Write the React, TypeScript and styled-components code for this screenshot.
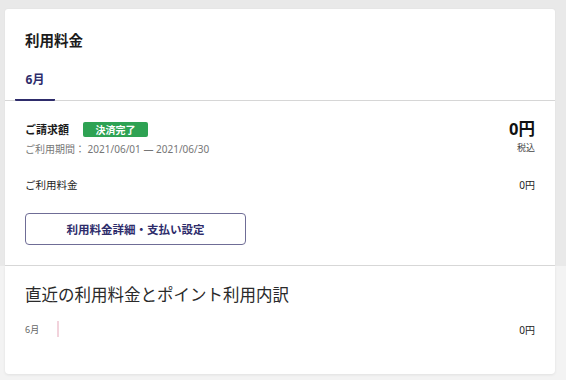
import React from "react";
import styled, { createGlobalStyle } from "styled-components";

const Global = createGlobalStyle`
  html, body { margin: 0; padding: 0; }
  body {
    background: #f3f3f3;
    font-family: "Noto Sans", "Noto Sans CJK JP", sans-serif;
    color: #222;
    width: 566px;
    height: 380px;
    overflow: hidden;
  }
`;

const Page = styled.div`
  display: flex;
  flex-direction: column;
`;

const TopArea = styled.div`
  background: #e9e9e9;
  padding: 9px 11px 0 5px;
`;

const TopCard = styled.section`
  background: #fff;
  border-radius: 3px 3px 0 0;
  box-shadow: 0 0 2px rgba(0, 0, 0, 0.06);
`;

const Header = styled.div`
  padding: 20px 20px 0 20px;
`;

const Title = styled.h2`
  margin: 0;
  font-size: 14.5px;
  font-weight: 700;
  line-height: 22px;
  color: #1c1c1c;
`;

const Tabs = styled.div`
  display: flex;
  margin-top: 20px;
  border-bottom: 1px solid #d6d6d6;
  margin-left: -20px;
  margin-right: -20px;
  padding-left: 10px;
`;

const Tab = styled.div<{ $active?: boolean }>`
  width: 40px;
  text-align: center;
  font-size: 12px;
  font-weight: 700;
  color: #2e2c6b;
  line-height: 18px;
  padding-bottom: 10px;
  border-bottom: 2px solid ${(p) => (p.$active ? "#2e2c6b" : "transparent")};
  margin-bottom: -1px;
  border-radius: 1px;
`;

const Body = styled.div`
  padding: 20px 20px 20px 20px;
  border-bottom: 1px solid #d9d9d9;
`;

const BillRow = styled.div`
  display: flex;
  justify-content: space-between;
  align-items: flex-start;
`;

const BillLeft = styled.div`
  display: flex;
  flex-direction: column;
`;

const LabelLine = styled.div`
  display: flex;
  align-items: center;
  gap: 14px;
  height: 16px;
`;

const BillLabel = styled.span`
  font-size: 11px;
  font-weight: 700;
  color: #1c1c1c;
`;

const Badge = styled.span`
  background: #2ea253;
  color: #fff;
  font-size: 10px;
  font-weight: 700;
  border-radius: 2px;
  width: 65px;
  height: 15px;
  display: inline-flex;
  align-items: center;
  justify-content: center;
`;

const Period = styled.div`
  font-size: 10px;
  color: #767676;
  margin-top: 4px;
  line-height: 16px;
`;

const BillRight = styled.div`
  display: flex;
  flex-direction: column;
  align-items: flex-end;
`;

const BigAmount = styled.div`
  font-size: 16.5px;
  font-weight: 700;
  color: #111;
  line-height: 18px;
  margin-top: -1px;
`;

const TaxNote = styled.div`
  font-size: 9px;
  color: #444;
  line-height: 12px;
  margin-top: 4px;
`;

const LineRow = styled.div`
  display: flex;
  justify-content: space-between;
  align-items: center;
  margin-top: 20px;
  font-size: 10.5px;
  color: #222;
  line-height: 16px;
`;

const Small = styled.span`
  font-size: 10px;
`;

const DetailButton = styled.button`
  margin-top: 20px;
  width: 221px;
  height: 32px;
  background: #fff;
  border: 1px solid #6f6d96;
  border-radius: 4px;
  font-family: inherit;
  font-size: 11.5px;
  font-weight: 700;
  color: #2e2c6b;
  cursor: pointer;
`;

const BottomArea = styled.div`
  padding: 0 11px 0 5px;
  background: #f3f3f3;
`;

const BottomCard = styled.section`
  background: #fff;
  border-radius: 0 0 4px 4px;
  box-shadow: 0 1px 3px rgba(0, 0, 0, 0.08);
  padding: 17px 20px 24px 20px;
  height: 108px;
  box-sizing: border-box;
`;

const SubTitle = styled.h3`
  margin: 0;
  font-size: 16.5px;
  font-weight: 400;
  color: #2a2a2a;
  line-height: 24px;
`;

const MonthRow = styled.div`
  display: flex;
  align-items: center;
  margin-top: 14px;
  height: 16px;
`;

const MonthLabel = styled.span`
  font-size: 9px;
  color: #666;
  width: 32px;
`;

const Bar = styled.span`
  width: 2px;
  height: 16px;
  background: #f2d3dc;
`;

const MonthAmount = styled.span`
  margin-left: auto;
  font-size: 10px;
  color: #222;
`;

export default function App() {
  return (
    <>
      <Global />
      <Page>
        <TopArea>
          <TopCard>
            <Header>
              <Title>利用料金</Title>
              <Tabs>
                <Tab $active>6月</Tab>
              </Tabs>
            </Header>
            <Body>
              <BillRow>
                <BillLeft>
                  <LabelLine>
                    <BillLabel>ご請求額</BillLabel>
                    <Badge>決済完了</Badge>
                  </LabelLine>
                  <Period>ご利用期間： 2021/06/01 — 2021/06/30</Period>
                </BillLeft>
                <BillRight>
                  <BigAmount>0円</BigAmount>
                  <TaxNote>税込</TaxNote>
                </BillRight>
              </BillRow>
              <LineRow>
                <span>ご利用料金</span>
                <Small>0円</Small>
              </LineRow>
              <DetailButton>利用料金詳細・支払い設定</DetailButton>
            </Body>
          </TopCard>
        </TopArea>
        <BottomArea>
          <BottomCard>
            <SubTitle>直近の利用料金とポイント利用内訳</SubTitle>
            <MonthRow>
              <MonthLabel>6月</MonthLabel>
              <Bar />
              <MonthAmount>0円</MonthAmount>
            </MonthRow>
          </BottomCard>
        </BottomArea>
      </Page>
    </>
  );
}
